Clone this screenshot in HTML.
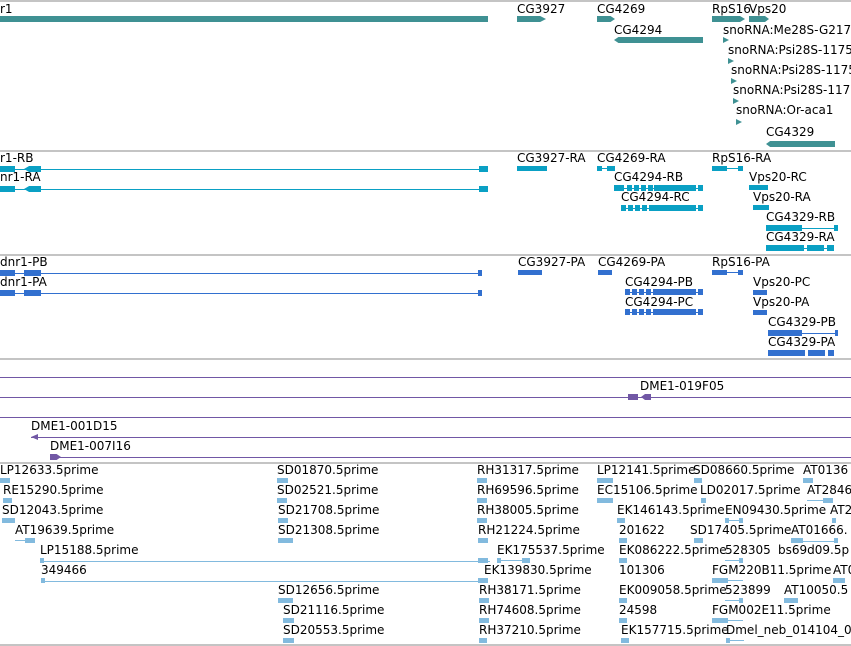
<!DOCTYPE html>
<html><head><meta charset="utf-8"><style>
body{margin:0;width:851px;height:646px;background:#fff;position:relative;overflow:hidden;font-family:"DejaVu Sans","Liberation Sans",sans-serif;font-size:12px;color:#000}
div{position:absolute}
.t{line-height:12px;white-space:nowrap}
.s{left:0;width:851px;height:2px;background:#c4c4c4}
.a{background:#3f9193}
.b{background:#0aa0c4}
.c{background:#3270cf}
.p{background:#7157a5}
.e{background:#82bade}
.l{height:1px}
</style></head><body>
<div class="s" style="top:0"></div>
<div class="s" style="top:150px"></div>
<div class="s" style="top:254px"></div>
<div class="s" style="top:358px"></div>
<div class="s" style="top:462px"></div>
<div class="s" style="top:644px"></div>

<!-- track 1 genes -->
<div class="t" style="left:0;top:3px">r1</div><div class="a" style="left:0;top:16px;width:488px;height:6px"></div>
<div class="t" style="left:517px;top:3px">CG3927</div><div class="a" style="left:517px;top:16px;width:29px;height:6px;clip-path:polygon(0 0,80% 0,100% 50%,80% 100%,0 100%)"></div>
<div class="t" style="left:597px;top:3px">CG4269</div><div class="a" style="left:597px;top:16px;width:18px;height:6px;clip-path:polygon(0 0,75% 0,100% 50%,75% 100%,0 100%)"></div>
<div class="t" style="left:614px;top:24px">CG4294</div><div class="a" style="left:614px;top:37px;width:89px;height:6px;clip-path:polygon(0 50%,5% 0,100% 0,100% 100%,5% 100%)"></div>
<div class="t" style="left:712px;top:3px">RpS16</div><div class="a" style="left:712px;top:16px;width:33px;height:6px;clip-path:polygon(0 0,85% 0,100% 50%,85% 100%,0 100%)"></div>
<div class="t" style="left:749px;top:3px">Vps20</div><div class="a" style="left:749px;top:16px;width:20px;height:6px;clip-path:polygon(0 0,80% 0,100% 50%,80% 100%,0 100%)"></div>
<div class="t" style="left:723px;top:24px">snoRNA:Me28S-G217</div><div class="a" style="left:723px;top:37px;width:6px;height:6px;clip-path:polygon(0 0,100% 50%,0 100%)"></div>
<div class="t" style="left:728px;top:44px">snoRNA:Psi28S-1175</div><div class="a" style="left:728px;top:58px;width:6px;height:6px;clip-path:polygon(0 0,100% 50%,0 100%)"></div>
<div class="t" style="left:731px;top:64px">snoRNA:Psi28S-1175</div><div class="a" style="left:731px;top:78px;width:6px;height:6px;clip-path:polygon(0 0,100% 50%,0 100%)"></div>
<div class="t" style="left:733px;top:84px">snoRNA:Psi28S-117</div><div class="a" style="left:733px;top:98px;width:6px;height:6px;clip-path:polygon(0 0,100% 50%,0 100%)"></div>
<div class="t" style="left:736px;top:104px">snoRNA:Or-aca1</div><div class="a" style="left:736px;top:119px;width:6px;height:6px;clip-path:polygon(0 0,100% 50%,0 100%)"></div>
<div class="t" style="left:766px;top:126px">CG4329</div><div class="a" style="left:766px;top:141px;width:69px;height:6px;clip-path:polygon(0 50%,6% 0,100% 0,100% 100%,6% 100%)"></div>

<!-- track 2 transcripts -->
<div class="t" style="left:0;top:152px">r1-RB</div>
<div class="b l" style="left:0;top:169px;width:485px"></div>
<div class="b" style="left:0;top:166px;width:15px;height:6px"></div><div class="b" style="left:24px;top:166px;width:17px;height:6px;clip-path:polygon(0 50%,30% 0,100% 0,100% 100%,30% 100%)"></div><div class="b" style="left:479px;top:166px;width:9px;height:6px"></div>
<div class="t" style="left:0;top:171px">nr1-RA</div>
<div class="b l" style="left:0;top:189px;width:485px"></div>
<div class="b" style="left:0;top:186px;width:15px;height:6px"></div><div class="b" style="left:24px;top:186px;width:17px;height:6px;clip-path:polygon(0 50%,30% 0,100% 0,100% 100%,30% 100%)"></div><div class="b" style="left:479px;top:186px;width:9px;height:6px"></div>
<div class="t" style="left:517px;top:152px">CG3927-RA</div><div class="b" style="left:517px;top:166px;width:30px;height:5px"></div>
<div class="t" style="left:597px;top:152px">CG4269-RA</div><div class="b" style="left:597px;top:166px;width:5px;height:5px"></div><div class="b l" style="left:597px;top:168px;width:15px"></div><div class="b" style="left:607px;top:166px;width:8px;height:5px"></div>
<div class="t" style="left:712px;top:152px">RpS16-RA</div><div class="b" style="left:712px;top:166px;width:15px;height:5px"></div><div class="b l" style="left:712px;top:168px;width:31px"></div><div class="b" style="left:738px;top:166px;width:5px;height:5px"></div>
<div class="t" style="left:614px;top:171px">CG4294-RB</div><div class="b l" style="left:614px;top:188px;width:89px"></div><div class="b" style="left:614px;top:185px;width:10px;height:6px"></div><div class="b" style="left:627px;top:185px;width:44px;height:6px;background:repeating-linear-gradient(90deg,#0aa0c4 0 5px,transparent 5px 7px)"></div><div class="b" style="left:654px;top:185px;width:42px;height:6px"></div><div class="b" style="left:698px;top:185px;width:5px;height:6px"></div>
<div class="t" style="left:749px;top:171px">Vps20-RC</div><div class="b" style="left:749px;top:185px;width:19px;height:5px"></div>
<div class="t" style="left:621px;top:191px">CG4294-RC</div><div class="b l" style="left:621px;top:208px;width:82px"></div><div class="b" style="left:621px;top:205px;width:33px;height:6px;background:repeating-linear-gradient(90deg,#0aa0c4 0 5px,transparent 5px 7px)"></div><div class="b" style="left:654px;top:205px;width:42px;height:6px"></div><div class="b" style="left:698px;top:205px;width:5px;height:6px"></div>
<div class="t" style="left:753px;top:191px">Vps20-RA</div><div class="b" style="left:753px;top:205px;width:16px;height:5px"></div>
<div class="t" style="left:766px;top:211px">CG4329-RB</div><div class="b" style="left:766px;top:225px;width:36px;height:6px"></div><div class="b l" style="left:766px;top:228px;width:72px"></div><div class="b" style="left:834px;top:225px;width:4px;height:6px"></div>
<div class="t" style="left:766px;top:231px">CG4329-RA</div><div class="b" style="left:766px;top:245px;width:38px;height:6px"></div><div class="b l" style="left:766px;top:248px;width:68px"></div><div class="b" style="left:807px;top:245px;width:17px;height:6px"></div><div class="b" style="left:827px;top:245px;width:7px;height:6px"></div>

<!-- track 3 proteins -->
<div class="t" style="left:0;top:256px">dnr1-PB</div>
<div class="c l" style="left:0;top:273px;width:482px"></div>
<div class="c" style="left:0;top:270px;width:15px;height:6px"></div><div class="c" style="left:24px;top:270px;width:17px;height:6px"></div><div class="c" style="left:478px;top:270px;width:4px;height:6px"></div>
<div class="t" style="left:0;top:276px">dnr1-PA</div>
<div class="c l" style="left:0;top:293px;width:482px"></div>
<div class="c" style="left:0;top:290px;width:15px;height:6px"></div><div class="c" style="left:24px;top:290px;width:17px;height:6px"></div><div class="c" style="left:478px;top:290px;width:4px;height:6px"></div>
<div class="t" style="left:518px;top:256px">CG3927-PA</div><div class="c" style="left:518px;top:270px;width:24px;height:5px"></div>
<div class="t" style="left:598px;top:256px">CG4269-PA</div><div class="c" style="left:598px;top:270px;width:14px;height:5px"></div>
<div class="t" style="left:712px;top:256px">RpS16-PA</div><div class="c" style="left:712px;top:270px;width:15px;height:5px"></div><div class="c l" style="left:712px;top:272px;width:31px"></div><div class="c" style="left:738px;top:270px;width:5px;height:5px"></div>
<div class="t" style="left:625px;top:276px">CG4294-PB</div><div class="c l" style="left:625px;top:292px;width:78px"></div><div class="c" style="left:625px;top:289px;width:28px;height:6px;background:repeating-linear-gradient(90deg,#3270cf 0 5px,transparent 5px 7px)"></div><div class="c" style="left:653px;top:289px;width:43px;height:6px"></div><div class="c" style="left:698px;top:289px;width:5px;height:6px"></div>
<div class="t" style="left:753px;top:276px">Vps20-PC</div><div class="c" style="left:753px;top:290px;width:14px;height:5px"></div>
<div class="t" style="left:625px;top:296px">CG4294-PC</div><div class="c l" style="left:625px;top:312px;width:78px"></div><div class="c" style="left:625px;top:309px;width:28px;height:6px;background:repeating-linear-gradient(90deg,#3270cf 0 5px,transparent 5px 7px)"></div><div class="c" style="left:653px;top:309px;width:43px;height:6px"></div><div class="c" style="left:698px;top:309px;width:5px;height:6px"></div>
<div class="t" style="left:753px;top:296px">Vps20-PA</div><div class="c" style="left:753px;top:310px;width:14px;height:5px"></div>
<div class="t" style="left:768px;top:316px">CG4329-PB</div><div class="c" style="left:768px;top:330px;width:34px;height:6px"></div><div class="c l" style="left:768px;top:333px;width:70px"></div><div class="c" style="left:835px;top:330px;width:3px;height:6px"></div>
<div class="t" style="left:768px;top:336px">CG4329-PA</div><div class="c" style="left:768px;top:350px;width:37px;height:6px"></div><div class="c" style="left:808px;top:350px;width:17px;height:6px"></div><div class="c" style="left:828px;top:350px;width:6px;height:6px"></div>

<!-- track 4 clones -->
<div class="p l" style="left:0;top:377px;width:851px"></div>
<div class="p l" style="left:0;top:397px;width:851px"></div>
<div class="p l" style="left:0;top:417px;width:851px"></div>
<div class="p l" style="left:31px;top:437px;width:820px"></div>
<div class="p l" style="left:50px;top:457px;width:801px"></div>
<div class="t" style="left:640px;top:380px">DME1-019F05</div><div class="p" style="left:628px;top:394px;width:10px;height:6px"></div><div class="p" style="left:641px;top:394px;width:10px;height:6px;clip-path:polygon(0 50%,40% 0,100% 0,100% 100%,40% 100%)"></div>
<div class="t" style="left:31px;top:420px">DME1-001D15</div><div class="p" style="left:31px;top:434px;width:7px;height:6px;clip-path:polygon(0 50%,100% 0,100% 100%)"></div>
<div class="t" style="left:50px;top:440px">DME1-007I16</div><div class="p" style="left:50px;top:454px;width:11px;height:6px;clip-path:polygon(0 0,60% 0,100% 50%,60% 100%,0 100%)"></div>

<!-- track 5 ESTs -->
<div class="e l" style="left:40px;top:561px;width:450px"></div>
<div class="e l" style="left:41px;top:581px;width:440px"></div>

<div class="t" style="left:0;top:464px">LP12633.5prime</div><div class="e" style="left:0;top:478px;width:10px;height:5px"></div>
<div class="t" style="left:277px;top:464px">SD01870.5prime</div><div class="e" style="left:277px;top:478px;width:11px;height:5px"></div>
<div class="t" style="left:477px;top:464px">RH31317.5prime</div><div class="e" style="left:477px;top:478px;width:10px;height:5px"></div>
<div class="t" style="left:597px;top:464px">LP12141.5prime</div><div class="e" style="left:597px;top:478px;width:16px;height:5px"></div>
<div class="t" style="left:693px;top:464px">SD08660.5prime</div><div class="e" style="left:694px;top:478px;width:8px;height:5px"></div>
<div class="t" style="left:803px;top:464px">AT0136</div><div class="e" style="left:803px;top:478px;width:10px;height:5px"></div>

<div class="t" style="left:3px;top:484px">RE15290.5prime</div><div class="e" style="left:3px;top:498px;width:9px;height:5px"></div>
<div class="t" style="left:277px;top:484px">SD02521.5prime</div><div class="e" style="left:277px;top:498px;width:10px;height:5px"></div>
<div class="t" style="left:477px;top:484px">RH69596.5prime</div><div class="e" style="left:477px;top:498px;width:10px;height:5px"></div>
<div class="t" style="left:597px;top:484px">EC15106.5prime</div><div class="e" style="left:597px;top:498px;width:16px;height:5px"></div>
<div class="t" style="left:700px;top:484px">LD02017.5prime</div><div class="e" style="left:701px;top:498px;width:5px;height:5px"></div>
<div class="t" style="left:807px;top:484px">AT2846</div><div class="e l" style="left:807px;top:500px;width:26px"></div><div class="e" style="left:823px;top:498px;width:10px;height:5px"></div>

<div class="t" style="left:2px;top:504px">SD12043.5prime</div><div class="e" style="left:2px;top:518px;width:13px;height:5px"></div>
<div class="t" style="left:278px;top:504px">SD21708.5prime</div><div class="e" style="left:278px;top:518px;width:10px;height:5px"></div>
<div class="t" style="left:477px;top:504px">RH38005.5prime</div><div class="e" style="left:477px;top:518px;width:10px;height:5px"></div>
<div class="t" style="left:617px;top:504px">EK146143.5prime</div><div class="e" style="left:617px;top:518px;width:8px;height:5px"></div>
<div class="t" style="left:725px;top:504px">EN09430.5prime</div><div class="e l" style="left:725px;top:520px;width:18px"></div><div class="e" style="left:725px;top:518px;width:4px;height:5px"></div><div class="e" style="left:739px;top:518px;width:4px;height:5px"></div>
<div class="t" style="left:830px;top:504px">AT2</div><div class="e" style="left:832px;top:518px;width:4px;height:5px"></div>

<div class="t" style="left:15px;top:524px">AT19639.5prime</div><div class="e l" style="left:15px;top:540px;width:20px"></div><div class="e" style="left:25px;top:538px;width:10px;height:5px"></div>
<div class="t" style="left:278px;top:524px">SD21308.5prime</div><div class="e" style="left:278px;top:538px;width:15px;height:5px"></div>
<div class="t" style="left:478px;top:524px">RH21224.5prime</div><div class="e" style="left:478px;top:538px;width:10px;height:5px"></div>
<div class="t" style="left:619px;top:524px">201622</div><div class="e" style="left:619px;top:538px;width:8px;height:5px"></div>
<div class="t" style="left:690px;top:524px">SD17405.5prime</div><div class="e" style="left:694px;top:538px;width:9px;height:5px"></div>
<div class="t" style="left:791px;top:524px">AT01666.</div><div class="e l" style="left:791px;top:541px;width:47px"></div><div class="e" style="left:791px;top:538px;width:12px;height:5px"></div><div class="e" style="left:834px;top:538px;width:4px;height:5px"></div>

<div class="t" style="left:40px;top:544px">LP15188.5prime</div><div class="e" style="left:40px;top:558px;width:4px;height:5px"></div>
<div class="t" style="left:497px;top:544px">EK175537.5prime</div><div class="e l" style="left:497px;top:560px;width:32px"></div><div class="e" style="left:497px;top:558px;width:4px;height:5px"></div><div class="e" style="left:522px;top:558px;width:8px;height:5px"></div><div class="e" style="left:478px;top:558px;width:10px;height:5px"></div>
<div class="t" style="left:619px;top:544px">EK086222.5prime</div><div class="e" style="left:619px;top:558px;width:8px;height:5px"></div>
<div class="t" style="left:725px;top:544px">528305</div><div class="e l" style="left:725px;top:560px;width:18px"></div><div class="e" style="left:739px;top:558px;width:4px;height:5px"></div>
<div class="t" style="left:778px;top:544px">bs69d09.5p</div>

<div class="t" style="left:41px;top:564px">349466</div><div class="e" style="left:41px;top:578px;width:4px;height:5px"></div>
<div class="t" style="left:484px;top:564px">EK139830.5prime</div><div class="e" style="left:478px;top:578px;width:10px;height:5px"></div>
<div class="t" style="left:619px;top:564px">101306</div>
<div class="t" style="left:712px;top:564px">FGM220B11.5prime</div><div class="e" style="left:712px;top:578px;width:16px;height:5px"></div><div class="e" style="left:725px;top:580px;width:18px;height:1px"></div>
<div class="t" style="left:833px;top:564px">AT0</div><div class="e" style="left:833px;top:578px;width:12px;height:5px"></div>

<div class="t" style="left:278px;top:584px">SD12656.5prime</div><div class="e" style="left:278px;top:598px;width:15px;height:5px"></div>
<div class="t" style="left:479px;top:584px">RH38171.5prime</div><div class="e" style="left:479px;top:598px;width:10px;height:5px"></div>
<div class="t" style="left:619px;top:584px">EK009058.5prime</div><div class="e" style="left:619px;top:598px;width:8px;height:5px"></div>
<div class="t" style="left:725px;top:584px">523899</div><div class="e l" style="left:725px;top:600px;width:18px"></div><div class="e" style="left:739px;top:598px;width:4px;height:5px"></div>
<div class="t" style="left:784px;top:584px">AT10050.5</div><div class="e" style="left:784px;top:598px;width:14px;height:5px"></div>

<div class="t" style="left:283px;top:604px">SD21116.5prime</div><div class="e" style="left:283px;top:618px;width:11px;height:5px"></div>
<div class="t" style="left:479px;top:604px">RH74608.5prime</div><div class="e" style="left:479px;top:618px;width:10px;height:5px"></div>
<div class="t" style="left:619px;top:604px">24598</div><div class="e" style="left:619px;top:618px;width:8px;height:5px"></div>
<div class="t" style="left:712px;top:604px">FGM002E11.5prime</div><div class="e" style="left:712px;top:618px;width:16px;height:5px"></div><div class="e l" style="left:725px;top:620px;width:18px"></div>

<div class="t" style="left:283px;top:624px">SD20553.5prime</div><div class="e" style="left:283px;top:638px;width:11px;height:5px"></div>
<div class="t" style="left:479px;top:624px">RH37210.5prime</div><div class="e" style="left:479px;top:638px;width:8px;height:5px"></div>
<div class="t" style="left:621px;top:624px">EK157715.5prime</div><div class="e" style="left:621px;top:638px;width:8px;height:5px"></div>
<div class="t" style="left:726px;top:624px">Dmel_neb_014104_0</div><div class="e l" style="left:726px;top:640px;width:18px"></div><div class="e" style="left:726px;top:638px;width:4px;height:5px"></div>
</body></html>
